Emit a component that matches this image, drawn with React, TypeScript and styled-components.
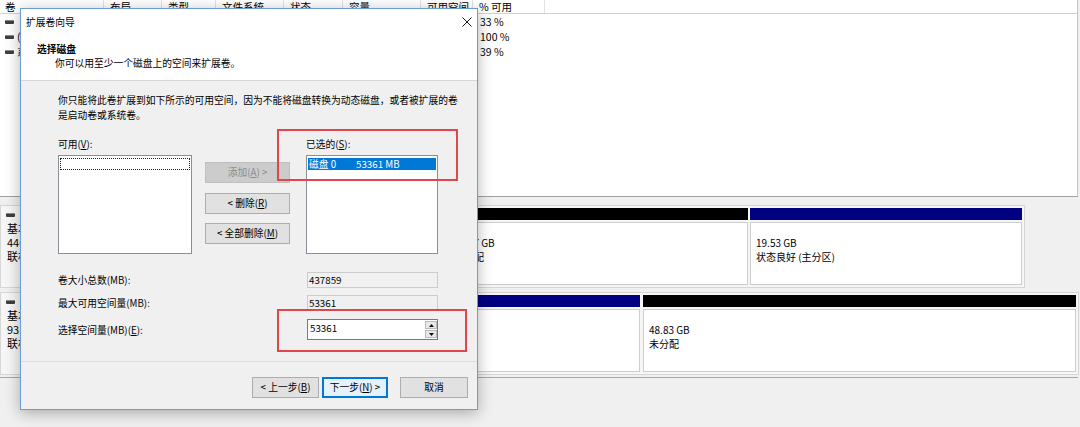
import React from 'react';
import styled, { createGlobalStyle } from 'styled-components';

const GlobalStyle = createGlobalStyle`
  *, *::before, *::after { box-sizing: border-box; }
  html, body { margin: 0; padding: 0; background: #f0f0f0; }
  body {
    font-family: "Noto Sans CJK SC", "Noto Sans", sans-serif;
    font-size: 10px;
    color: #000;
  }
  #root { width: 1080px; height: 427px; }
`;

const COLS = '104px 58px 54px 68px 59px 78px 52px 72px 1fr';

const Screen = styled.div`
  position: relative;
  width: 1080px;
  height: 427px;
  overflow: hidden;
  background: #f0f0f0;
  display: flex;
  flex-direction: column;
`;

/* ---------- background: volume list ---------- */
const ListPane = styled.div`
  flex: none;
  width: 1078px;
  height: 197px;
  background: #fff;
  border-bottom: 1px solid #a0a0a0;
  border-right: 1px solid #c4c4c4;
`;

const HeaderRow = styled.div`
  display: grid;
  grid-template-columns: ${COLS};
  height: 14px;
  border-bottom: 1px solid #d0d0d0;
  overflow: hidden;
`;

const HeaderCell = styled.div`
  display: flex;
  align-items: flex-end;
  padding: 0 0 1px 6px;
  border-right: 1px solid #e2e2e2;
  font-size: 10.5px;
  line-height: 11px;
  white-space: nowrap;
  overflow: hidden;
  &:first-child { padding-left: 5px; }
  &:last-child { border-right: none; }
`;

const ListRow = styled.div`
  display: grid;
  grid-template-columns: ${COLS};
  height: 15px;
  align-items: center;
`;

const ListCell = styled.div`
  padding-left: 7px;
  font-size: 10.5px;
  line-height: 15px;
  white-space: nowrap;
  overflow: hidden;
`;

const NameCell = styled(ListCell)`
  display: flex;
  align-items: center;
  gap: 3px;
  padding-left: 5px;
`;

const VolIcon = styled.span`
  flex: none;
  width: 9px;
  height: 4px;
  background: #3e3e3e;
  border-top: 1px solid #8a8a8a;
  border-radius: 1px;
`;

/* ---------- background: disk map ---------- */
const DiskPane = styled.div`
  flex: none;
  width: 1078px;
  padding: 8px 0 2px 0;
  border-bottom: 1px solid #a8a8a8;
  display: flex;
  flex-direction: column;
  align-items: flex-start;
  gap: 4px;
`;

const DiskRow = styled.div<{ $gap: number }>`
  display: flex;
  height: 83px;
  padding: 2px;
  gap: ${p => p.$gap}px;
  border: 1px solid #d6d6d6;
  background: #f6f6f6;
`;

const DiskLabel = styled.div`
  flex: none;
  width: 95px;
  padding-left: 4px;
  line-height: 14px;
  font-size: 11px;
  white-space: nowrap;
`;

const DiskLabelHead = styled.div`
  display: flex;
  align-items: center;
  gap: 5px;
  height: 13px;
  margin-left: -1px;
`;

const Partition = styled.div<{ $w: number }>`
  flex: none;
  width: ${p => p.$w}px;
  display: flex;
  flex-direction: column;
  gap: 2px;
`;

const PartBar = styled.div<{ $color: string }>`
  height: 12px;
  background: ${p => p.$color};
`;

const PartBox = styled.div`
  flex: 1;
  background: #fff;
  border: 1px solid #cdcdcd;
  padding: 0 0 7px 5px;
  display: flex;
  flex-direction: column;
  justify-content: center;
  font-size: 10px;
  line-height: 14px;
  white-space: nowrap;
  overflow: hidden;
`;

/* ---------- dialog ---------- */
const Dialog = styled.div`
  position: absolute;
  left: 20px;
  top: 8px;
  width: 458px;
  height: 402px;
  border: 1px solid #6b9cd4;
  background: #f0f0f0;
  box-shadow: 0 3px 14px rgba(0, 0, 0, 0.3);
  display: flex;
  flex-direction: column;
  font-size: 9.75px;
`;

const TitleBar = styled.div`
  flex: none;
  height: 25px;
  background: #fff;
  display: flex;
  align-items: center;
  justify-content: space-between;
  padding: 0 5px 0 5px;
`;

const TitleText = styled.span`
  line-height: 14px;
`;

const CloseIcon = () => (
  <svg width="10" height="10" viewBox="0 0 10 10">
    <line x1="0.5" y1="0.5" x2="9.5" y2="9.5" stroke="#1a1a1a" strokeWidth="1" />
    <line x1="9.5" y1="0.5" x2="0.5" y2="9.5" stroke="#1a1a1a" strokeWidth="1" />
  </svg>
);

const Header = styled.div`
  flex: none;
  height: 47px;
  background: #fff;
  padding: 8px 0 0 16px;
  border-bottom: 1px solid #d7d7d7;
  line-height: 14px;
`;

const HeaderTitle = styled.div`
  font-weight: 700;
`;

const HeaderSub = styled.div`
  padding-left: 18px;
`;

const Body = styled.div`
  flex: 1;
  padding: 12px 0 0 37px;
  display: flex;
  flex-direction: column;
`;

const Desc = styled.div`
  line-height: 15px;
  white-space: nowrap;
`;

const Picker = styled.div`
  display: flex;
  margin-top: 14px;
`;

const PickCol = styled.div<{ $w: number }>`
  flex: none;
  width: ${p => p.$w}px;
  display: flex;
  flex-direction: column;
`;

const PickLabel = styled.div`
  line-height: 15px;
  margin-bottom: 3px;
`;

const ListBox = styled.div`
  height: 99px;
  background: #fff;
  border: 1px solid #8a8f97;
  padding: 2px 1px;
`;

const FocusRow = styled.div`
  height: 12px;
  border: 1px dotted #222;
`;

const SelRow = styled.div`
  height: 12px;
  background: #0078d7;
  color: #fff;
  display: flex;
  align-items: center;
  padding-left: 1px;
  line-height: 12px;
  white-space: nowrap;
`;

const SelDisk = styled.span`
  width: 47px;
  flex: none;
`;

const ButtonCol = styled.div`
  flex: none;
  width: 85px;
  margin: 0 16px 0 13px;
  padding-top: 25px;
  display: flex;
  flex-direction: column;
  gap: 9.5px;
`;

const Btn = styled.button<{ $w?: number; $focus?: boolean }>`
  width: ${p => (p.$w ? `${p.$w}px` : '100%')};
  height: 21px;
  padding: 0;
  margin: 0;
  font: inherit;
  font-size: 9.75px;
  line-height: 19px;
  color: #000;
  background: ${p => (p.$focus ? '#e5f1fb' : '#e1e1e1')};
  border: 1px solid ${p => (p.$focus ? '#0078d7' : '#adadad')};
  box-shadow: ${p => (p.$focus ? 'inset 0 0 0 1px #0078d7' : 'none')};
  white-space: nowrap;
  &:disabled {
    background: #cccccc;
    border-color: #bfbfbf;
    color: #8b8b8b;
  }
`;

const Fields = styled.div`
  margin-top: 18px;
  display: flex;
  flex-direction: column;
`;

const FieldRow = styled.div<{ $h: number; $mt: number }>`
  display: grid;
  grid-template-columns: 249px 131px;
  align-items: center;
  height: ${p => p.$h}px;
  margin-top: ${p => p.$mt}px;
  line-height: 14px;
  white-space: nowrap;
`;

const ReadField = styled.div`
  height: 16px;
  border: 1px solid #cccccc;
  background: #f0f0f0;
  padding-left: 1px;
  line-height: 14px;
`;

const SpinBox = styled.div`
  height: 21px;
  border: 1px solid #7a7a7a;
  background: #fff;
  display: flex;
`;

const SpinText = styled.div`
  flex: 1;
  padding: 1px 0 0 2px;
  line-height: 14px;
`;

const SpinButtons = styled.div`
  flex: none;
  width: 12px;
  display: flex;
  flex-direction: column;
  gap: 1px;
  padding: 1px 0;
`;

const SpinBtn = styled.div`
  flex: 1;
  background: #e8e8e8;
  border: 1px solid #b9b9b9;
  display: flex;
  align-items: center;
  justify-content: center;
`;

const Arrow = ({ up }: { up?: boolean }) => (
  <svg width="5" height="3" viewBox="0 0 5 3">
    <polygon points={up ? '2.5,0 5,3 0,3' : '0,0 5,0 2.5,3'} fill="#111" />
  </svg>
);

const Footer = styled.div`
  flex: none;
  border-top: 1px solid #dcdcdc;
  padding: 15px 9px 11px 0;
  display: flex;
  justify-content: flex-end;
`;

const FooterGap = styled.div<{ $w: number }>`
  width: ${p => p.$w}px;
  flex: none;
`;

const Mark = styled.div<{ $l: number; $t: number; $w: number; $h: number }>`
  position: absolute;
  left: ${p => p.$l}px;
  top: ${p => p.$t}px;
  width: ${p => p.$w}px;
  height: ${p => p.$h}px;
  border: 2px solid #e0474c;
  pointer-events: none;
`;

const headers = ['卷', '布局', '类型', '文件系统', '状态', '容量', '可用空间', '% 可用', ''];

const rows = [
  { name: '', cells: ['简单', '基本', '', '良好', '100 MB', '33 MB', '33 %'] },
  { name: '(磁盘 0 分区 2)', cells: ['简单', '基本', '', '良好', '499 MB', '499 MB', '100 %'] },
  { name: '系统 (C:)', cells: ['简单', '基本', 'NTFS', '良好', '427 GB', '166 GB', '39 %'] },
];

export default function App() {
  return (
    <Screen>
      <GlobalStyle />
      <ListPane>
        <HeaderRow>
          {headers.map((h, i) => (
            <HeaderCell key={i}>{h}</HeaderCell>
          ))}
        </HeaderRow>
        {rows.map((r, i) => (
          <ListRow key={i}>
            <NameCell>
              <VolIcon />
              <span>{r.name}</span>
            </NameCell>
            {r.cells.map((c, j) => (
              <ListCell key={j}>{c}</ListCell>
            ))}
          </ListRow>
        ))}
      </ListPane>

      <DiskPane>
        <DiskRow $gap={2}>
          <DiskLabel>
            <DiskLabelHead>
              <VolIcon />
              <span>磁盘 0</span>
            </DiskLabelHead>
            <div>基本</div>
            <div>446.63 GB</div>
            <div>联机</div>
          </DiskLabel>
          <Partition $w={346}>
            <PartBar $color="#000080" />
            <PartBox>
              <div>系统 (C:)</div>
              <div>427.59 GB NTFS</div>
            </PartBox>
          </Partition>
          <Partition $w={300}>
            <PartBar $color="#000" />
            <PartBox>
              <div>28.77 GB</div>
              <div>未分配</div>
            </PartBox>
          </Partition>
          <Partition $w={272}>
            <PartBar $color="#000080" />
            <PartBox>
              <div>19.53 GB</div>
              <div>状态良好 (主分区)</div>
            </PartBox>
          </Partition>
        </DiskRow>
        <DiskRow $gap={3}>
          <DiskLabel>
            <DiskLabelHead>
              <VolIcon />
              <span>磁盘 1</span>
            </DiskLabelHead>
            <div>基本</div>
            <div>931.51 GB</div>
            <div>联机</div>
          </DiskLabel>
          <Partition $w={539}>
            <PartBar $color="#000080" />
            <PartBox>
              <div>882.68 GB</div>
              <div>状态良好 (主分区)</div>
            </PartBox>
          </Partition>
          <Partition $w={433}>
            <PartBar $color="#000" />
            <PartBox>
              <div>48.83 GB</div>
              <div>未分配</div>
            </PartBox>
          </Partition>
        </DiskRow>
      </DiskPane>

      <Dialog>
        <TitleBar>
          <TitleText>扩展卷向导</TitleText>
          <CloseIcon />
        </TitleBar>
        <Header>
          <HeaderTitle>选择磁盘</HeaderTitle>
          <HeaderSub>你可以用至少一个磁盘上的空间来扩展卷。</HeaderSub>
        </Header>
        <Body>
          <Desc>
            <div>你只能将此卷扩展到如下所示的可用空间，因为不能将磁盘转换为动态磁盘，或者被扩展的卷</div>
            <div>是启动卷或系统卷。</div>
          </Desc>
          <Picker>
            <PickCol $w={134}>
              <PickLabel>
                可用(<u>V</u>):
              </PickLabel>
              <ListBox>
                <FocusRow />
              </ListBox>
            </PickCol>
            <ButtonCol>
              <Btn disabled>
                添加(<u>A</u>) &gt;
              </Btn>
              <Btn>
                &lt; 删除(<u>R</u>)
              </Btn>
              <Btn>
                &lt; 全部删除(<u>M</u>)
              </Btn>
            </ButtonCol>
            <PickCol $w={132}>
              <PickLabel>
                已选的(<u>S</u>):
              </PickLabel>
              <ListBox>
                <SelRow>
                  <SelDisk>磁盘 0</SelDisk>
                  <span>53361 MB</span>
                </SelRow>
              </ListBox>
            </PickCol>
          </Picker>
          <Fields>
            <FieldRow $h={16} $mt={0}>
              <span>卷大小总数(MB):</span>
              <ReadField>437859</ReadField>
            </FieldRow>
            <FieldRow $h={16} $mt={7}>
              <span>最大可用空间量(MB):</span>
              <ReadField>53361</ReadField>
            </FieldRow>
            <FieldRow $h={21} $mt={8}>
              <span>
                选择空间量(MB)(<u>E</u>):
              </span>
              <SpinBox>
                <SpinText>53361</SpinText>
                <SpinButtons>
                  <SpinBtn>
                    <Arrow up />
                  </SpinBtn>
                  <SpinBtn>
                    <Arrow />
                  </SpinBtn>
                </SpinButtons>
              </SpinBox>
            </FieldRow>
          </Fields>
        </Body>
        <Footer>
          <Btn $w={67}>
            &lt; 上一步(<u>B</u>)
          </Btn>
          <FooterGap $w={3} />
          <Btn $w={66} $focus>
            下一步(<u>N</u>) &gt;
          </Btn>
          <FooterGap $w={12} />
          <Btn $w={68}>取消</Btn>
        </Footer>
        <Mark $l={256} $t={120} $w={181} $h={52} />
        <Mark $l={256} $t={300} $w={190} $h={43} />
      </Dialog>
    </Screen>
  );
}
